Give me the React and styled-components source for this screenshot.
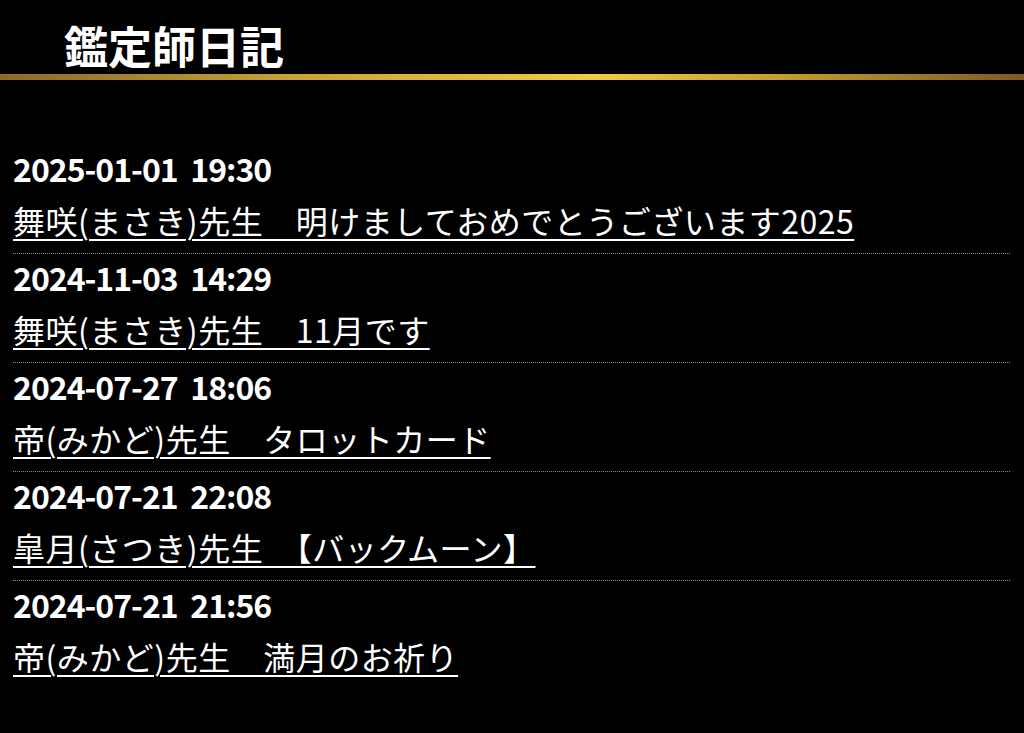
import React from 'react';
import styled, { createGlobalStyle } from 'styled-components';

const GlobalStyle = createGlobalStyle`
  html, body {
    margin: 0;
    padding: 0;
    background: #000;
  }
  body {
    font-family: "Noto Sans CJK JP", "Noto Sans", sans-serif;
    color: #fff;
  }
`;

const entries = [
  { date: '2025-01-01\u00a0\u00a019:30', title: '舞咲(まさき)先生　明けましておめでとうございます2025' },
  { date: '2024-11-03\u00a0\u00a014:29', title: '舞咲(まさき)先生　11月です' },
  { date: '2024-07-27\u00a0\u00a018:06', title: '帝(みかど)先生　タロットカード' },
  { date: '2024-07-21\u00a0\u00a022:08', title: '皐月(さつき)先生　【バックムーン】' },
  { date: '2024-07-21\u00a0\u00a021:56', title: '帝(みかど)先生　満月のお祈り' },
];

const Page = styled.div`
  min-height: 733px;
  background: #000;
`;

const Header = styled.header`
  height: 80px;
  box-sizing: border-box;
  display: flex;
  align-items: center;
  padding: 16px 0 0 64px;
  border-bottom: 6px solid transparent;
  border-image: linear-gradient(90deg, #8c6a26 0%, #c9a53a 30%, #f0cc48 58%, #b8932f 80%, #7d5a22 100%) 1;
`;

const Title = styled.h1`
  margin: 0;
  font-size: 44px;
  font-weight: 700;
  line-height: 1;
`;

const List = styled.ul`
  list-style: none;
  margin: 0;
  padding: 65px 14px 0 13px;
`;

const Item = styled.li`
  padding-bottom: 10px;
  & + & {
    border-top: 1px dotted #8a8a8a;
  }
`;

const DateLine = styled.div`
  font-size: 32px;
  font-weight: 700;
  letter-spacing: -1px;
  line-height: 46px;
`;

const Link = styled.a`
  display: inline-block;
  margin-top: 6px;
  font-size: 32px;
  letter-spacing: 0.5px;
  line-height: 46px;
  color: #fff;
  text-decoration: underline;
  text-decoration-thickness: 2px;
  text-underline-offset: 5px;
`;

export default function App() {
  return (
    <Page>
      <GlobalStyle />
      <Header>
        <Title>鑑定師日記</Title>
      </Header>
      <List>
        {entries.map((e, i) => (
          <Item key={i}>
            <DateLine>{e.date}</DateLine>
            <Link href="#">{e.title}</Link>
          </Item>
        ))}
      </List>
    </Page>
  );
}
